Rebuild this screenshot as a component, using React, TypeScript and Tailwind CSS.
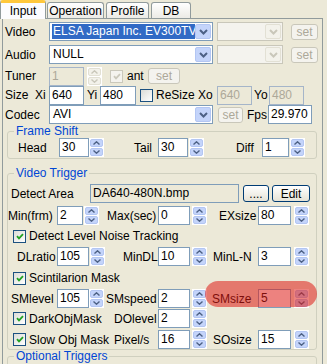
import React from 'react';

type Kids = { children?: React.ReactNode; className?: string };

// XP style edit box
function Box({ v, dis, ro, className = '' }: { v: string; dis?: boolean; ro?: boolean; className?: string }) {
  let tone = 'border-[#7F9DB9] bg-white text-black';
  if (dis) tone = 'border-[#A5B5C9] bg-[#ECE9D8] text-[#ACA899]';
  if (ro) tone = 'border-[#7F9DB9] bg-[#ECE9D8] text-black';
  return (
    <div className={`h-[19px] shrink-0 border px-[2px] text-[12px] leading-[17px] whitespace-nowrap overflow-hidden ${tone} ${className}`}>
      {v}
    </div>
  );
}

function Arrow({ up, color }: { up?: boolean; color: string }) {
  return (
    <svg width="7" height="4" viewBox="0 0 7 4">
      <path d={up ? 'M0.5 3.5 L3.5 0.8 L6.5 3.5' : 'M0.5 0.5 L3.5 3.2 L6.5 0.5'} stroke={color} strokeWidth="1.4" fill="none" />
    </svg>
  );
}

// up-down buddy control
function Spin({ dis, className = '' }: { dis?: boolean; className?: string }) {
  const fill = dis ? 'bg-[#F3F2EB] border-[#E2E0D4]' : 'bg-[#C4D4FA] border-[#B3C6F3]';
  const c = dis ? '#C9C7BA' : '#4D6185';
  return (
    <div className={`w-[15px] h-[19px] shrink-0 bg-white p-px flex flex-col gap-px ${className}`}>
      <div className={`flex-1 rounded-[2px] border flex items-center justify-center ${fill}`}>
        <Arrow up color={c} />
      </div>
      <div className={`flex-1 rounded-[2px] border flex items-center justify-center ${fill}`}>
        <Arrow color={c} />
      </div>
    </div>
  );
}

function Combo({ v, sel, dis, className = '' }: { v?: string; sel?: boolean; dis?: boolean; className?: string }) {
  return (
    <div className={`h-[19px] shrink-0 border flex p-px ${dis ? 'border-[#C9C7BA] bg-[#F4F3EE]' : 'border-[#7F9DB9] bg-white'} ${className}`}>
      <div className="flex-1 min-w-0 overflow-hidden pl-px">
        {sel ? (
          <div className="h-[15px] bg-[#316AC5] text-white text-[12px] leading-[15px] whitespace-nowrap overflow-hidden pl-px">{v}</div>
        ) : (
          <div className="h-[15px] text-black text-[12px] leading-[15px] whitespace-nowrap pl-px">{v}</div>
        )}
      </div>
      <div className={`w-[16px] h-[15px] rounded-[2px] border flex items-center justify-center ${dis ? 'bg-[#F3F2EB] border-[#E2E0D4]' : 'bg-[#C4D4FA] border-[#B3C6F3]'}`}>
        <svg width="9" height="6" viewBox="0 0 9 6">
          <path d="M1 1 L4.5 4.5 L8 1" stroke={dis ? '#C9C7BA' : '#4D6185'} strokeWidth="2" fill="none" />
        </svg>
      </div>
    </div>
  );
}

function Btn({ label, dis, className = '' }: { label: string; dis?: boolean; className?: string }) {
  const tone = dis
    ? 'border-[#C9C7BA] text-[#ACA899] bg-[#F4F3EE]'
    : 'border-[#003C74] text-black bg-gradient-to-b from-white to-[#E6E3D6]';
  return (
    <div className={`h-[16px] shrink-0 rounded-[3px] border flex items-center justify-center text-[12px] leading-[12px] ${tone} ${className}`}>
      {label}
    </div>
  );
}

function Check({ on, dis, className = '' }: { on?: boolean; dis?: boolean; className?: string }) {
  return (
    <div
      className={`w-[13px] h-[13px] shrink-0 border flex items-center justify-center ${
        dis ? 'border-[#CAC8BB] bg-[#F4F3EE]' : 'border-[#1C5180] bg-gradient-to-br from-[#DCDCD7] to-white'
      } ${className}`}
    >
      {on && (
        <svg width="8" height="7" viewBox="0 0 8 7">
          <path d="M1 3.2 L3 5.4 L7 1.2" stroke={dis ? '#CAC8BB' : '#21A121'} strokeWidth="1.8" fill="none" />
        </svg>
      )}
    </div>
  );
}

function Lbl({ children, className = '' }: Kids) {
  return <span className={`shrink-0 text-[12px] leading-[14px] whitespace-nowrap ${className}`}>{children}</span>;
}

function Row({ children, className = '' }: Kids) {
  return <div className={`flex items-center ${className}`}>{children}</div>;
}

function Group({ title, children, className = '' }: Kids & { title: string }) {
  return (
    <fieldset className={`ml-[4px] w-[310px] border border-[#D0D0BF] rounded-[3px] ${className}`}>
      <legend className="ml-[6px] px-[2px] text-[#0046D5] text-[12px] leading-[12px]">{title}</legend>
      {children}
    </fieldset>
  );
}

function Tab({ label, on, className = '' }: { label: string; on?: boolean; className?: string }) {
  if (on)
    return (
      <div className={`relative z-10 -mb-px h-[19px] bg-[#FCFCFE] border-x border-[#919B9C] border-t-[3px] border-t-[#FFC83C] rounded-t-[3px] flex items-center justify-center text-[12px] ${className}`}>
        {label}
      </div>
    );
  return (
    <div className={`h-[16px] bg-gradient-to-b from-white to-[#ECEBE6] border-x border-t border-[#919B9C] rounded-t-[3px] flex items-center justify-center text-[12px] ${className}`}>
      {label}
    </div>
  );
}

export default function App() {
  return (
    <div className="relative w-[327px] h-[364px] overflow-hidden bg-[#ECE9D8] text-black font-['Liberation_Sans',Arial,sans-serif]">
      <div className="flex items-end h-[18px]">
        <Tab label="Input" on className="w-[46px]" />
        <Tab label="Operation" className="ml-px w-[57px]" />
        <Tab label="Profile" className="ml-[2px] w-[43px]" />
        <Tab label="DB" className="ml-[2px] w-[40px]" />
      </div>

      <div className="ml-[2px] w-[321px] h-[400px] border border-[#919B9C] bg-[#ECE9D8]">
        <Row className="mt-[3px] h-[19px]">
          <Lbl className="w-[46px] pl-[2px]">Video</Lbl>
          <Combo v="ELSA Japan Inc. EV300TV/XP" sel className="w-[164px]" />
          <Combo dis className="ml-[4px] w-[66px]" />
          <Btn label="set" dis className="ml-[8px] w-[27px]" />
        </Row>

        <Row className="mt-[4px] h-[19px]">
          <Lbl className="w-[46px] pl-[2px]">Audio</Lbl>
          <Combo v="NULL" className="w-[164px]" />
          <Combo dis className="ml-[4px] w-[66px]" />
          <Btn label="set" dis className="ml-[8px] w-[27px]" />
        </Row>

        <Row className="mt-[3px] h-[18px]">
          <Lbl className="w-[46px] pl-[2px]">Tuner</Lbl>
          <Box v="1" dis className="w-[35px] h-[18px]" />
          <Spin dis className="ml-[3px] h-[18px]" />
          <Check on dis className="ml-[8px]" />
          <Lbl className="ml-[4px] w-[21px]">ant</Lbl>
          <Btn label="set" dis className="w-[32px] h-[15px]" />
        </Row>

        <Row className="mt-px h-[18px]">
          <Lbl className="w-[32px] pl-[2px]">Size</Lbl>
          <Lbl className="w-[14px]">Xi</Lbl>
          <Box v="640" className="w-[35px] h-[18px]" />
          <Lbl className="ml-[3px] w-[13px]">Yi</Lbl>
          <Box v="480" className="w-[36px] h-[18px]" />
          <Check className="ml-[4px]" />
          <Lbl className="ml-[3px] w-[61px]">ReSize Xo</Lbl>
          <Box v="640" dis className="w-[35px] h-[18px]" />
          <Lbl className="ml-[2px] w-[15px]">Yo</Lbl>
          <Box v="480" dis className="w-[35px] h-[18px]" />
        </Row>

        <Row className="mt-px h-[19px]">
          <Lbl className="w-[46px] pl-[2px]">Codec</Lbl>
          <Combo v="AVI" className="w-[164px]" />
          <Btn label="set" dis className="ml-[5px] w-[25px]" />
          <Lbl className="ml-[4px] w-[21px]">Fps</Lbl>
          <Box v="29.970" className="w-[44px]" />
        </Row>

        <Group title="Frame Shift" className="mt-px pb-px">
          <Row className="mt-px h-[19px]">
            <Lbl className="ml-[10px] w-[41px]">Head</Lbl>
            <Box v="30" className="w-[30px]" />
            <Spin />
            <Lbl className="ml-[30px] w-[24px]">Tail</Lbl>
            <Box v="30" className="w-[30px]" />
            <Spin className="ml-px" />
            <Lbl className="ml-[32px] w-[26px]">Diff</Lbl>
            <Box v="1" className="w-[27px]" />
            <Spin className="ml-px" />
          </Row>
        </Group>

        <Group title="Video Trigger" className="mt-[8px]">
          <Row className="mt-[5px] h-[19px]">
            <Lbl className="ml-[3px] w-[79px]">Detect Area</Lbl>
            <Box v="DA640-480N.bmp" ro className="w-[149px]" />
            <Btn label="...." className="ml-[4px] w-[26px] h-[17px]" />
            <Btn label="Edit" className="ml-[3px] w-[38px] h-[17px]" />
          </Row>

          <Row className="mt-[3px] h-[19px]">
            <Lbl className="w-[49px]">Min(frm)</Lbl>
            <Box v="2" className="w-[26px]" />
            <Spin className="ml-px" />
            <Lbl className="ml-[8px] w-[51px]">Max(sec)</Lbl>
            <Box v="0" className="w-[32px]" />
            <Spin className="ml-[2px]" />
            <Lbl className="ml-[12px] w-[39px]">EXsize</Lbl>
            <Box v="80" className="w-[33px]" />
            <Spin className="ml-[3px]" />
          </Row>

          <Row className="mt-[3px] h-[16px]">
            <Check on className="ml-[5px]" />
            <Lbl className="ml-[3px]">Detect Level Noise Tracking</Lbl>
          </Row>

          <Row className="mt-[3px] h-[19px]">
            <Lbl className="ml-[9px] w-[40px]">DLratio</Lbl>
            <Box v="105" className="w-[32px]" />
            <Spin className="ml-px" />
            <Lbl className="ml-[18px] w-[35px]">MinDL</Lbl>
            <Box v="10" className="w-[32px]" />
            <Spin className="ml-[2px]" />
            <Lbl className="ml-[6px] w-[45px]">MinL-N</Lbl>
            <Box v="3" className="w-[33px]" />
            <Spin className="ml-[3px]" />
          </Row>

          <Row className="mt-[4px] h-[16px]">
            <Check on className="ml-[5px]" />
            <Lbl className="ml-[3px]">Scintilarion Mask</Lbl>
          </Row>

          <Row className="mt-[3px] h-[19px]">
            <Lbl className="ml-[3px] w-[46px]">SMlevel</Lbl>
            <Box v="105" className="w-[32px]" />
            <Spin />
            <Lbl className="ml-[2px] w-[52px]">SMspeed</Lbl>
            <Box v="2" className="w-[32px]" />
            <Spin className="ml-[2px]" />
            <Lbl className="ml-[5px] w-[46px]">SMsize</Lbl>
            <Box v="5" className="w-[33px]" />
            <Spin className="ml-[3px]" />
          </Row>

          <Row className="mt-px h-[19px]">
            <Check on className="ml-[5px]" />
            <Lbl className="ml-[3px] w-[85px]">DarkObjMask</Lbl>
            <Lbl className="w-[44px]">DOlevel</Lbl>
            <Box v="2" className="w-[32px]" />
            <Spin className="ml-[2px]" />
          </Row>

          <Row className="mt-[2px] h-[19px]">
            <Check on className="ml-[5px]" />
            <Lbl className="ml-[3px] w-[85px]">Slow Obj Mask</Lbl>
            <Lbl className="w-[44px]">Pixel/s</Lbl>
            <Box v="16" className="w-[32px]" />
            <Spin className="ml-[2px]" />
            <Lbl className="ml-[6px] w-[45px]">SOsize</Lbl>
            <Box v="15" className="w-[33px]" />
            <Spin className="ml-[3px]" />
          </Row>
        </Group>

        <Group title="Optional Triggers" className="mt-0 h-[40px]" />
      </div>

      {/* red highlight drawn over the SMsize control */}
      <div className="absolute left-[205px] top-[281px] w-[112px] h-[26px] rounded-full bg-[rgba(222,28,22,0.55)]" />
    </div>
  );
}
